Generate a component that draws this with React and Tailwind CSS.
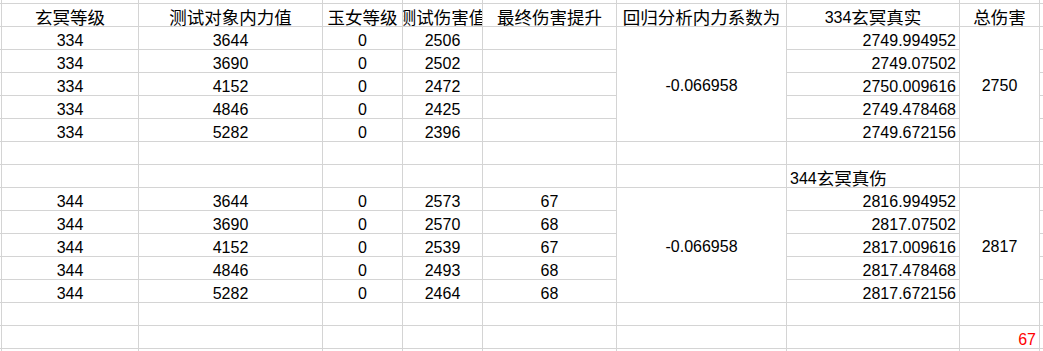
import React from 'react'
import clsx from 'clsx'

const block1 = [
  ['334', '3644', '0', '2506', '', '2749.994952'],
  ['334', '3690', '0', '2502', '', '2749.07502'],
  ['334', '4152', '0', '2472', '', '2750.009616'],
  ['334', '4846', '0', '2425', '', '2749.478468'],
  ['334', '5282', '0', '2396', '', '2749.672156'],
]

const block2 = [
  ['344', '3644', '0', '2573', '67', '2816.994952'],
  ['344', '3690', '0', '2570', '68', '2817.07502'],
  ['344', '4152', '0', '2539', '67', '2817.009616'],
  ['344', '4846', '0', '2493', '68', '2817.478468'],
  ['344', '5282', '0', '2464', '68', '2817.672156'],
]

const Cell = ({ children, align = 'center', merged = false, head = false, className }) => (
  <div
    className={clsx(
      'flex whitespace-nowrap bg-white leading-[16px]',
      merged ? 'row-span-5 items-center pt-[3px]' : 'items-end',
      align === 'center' && 'justify-center',
      align === 'right' && 'justify-end pr-[3px]',
      align === 'left' && 'justify-start pl-[3px]',
      head ? 'text-[17.5px]' : 'text-[16px]',
      className
    )}
  >
    {children}
  </div>
)

const EmptyRow = () => (
  <>
    {Array.from({ length: 10 }).map((_, i) => (
      <Cell key={i} />
    ))}
  </>
)

const Block = ({ rows, coef, total }) => (
  <>
    {rows.map((r, i) => (
      <React.Fragment key={i}>
        <Cell />
        <Cell>{r[0]}</Cell>
        <Cell>{r[1]}</Cell>
        <Cell>{r[2]}</Cell>
        <Cell>{r[3]}</Cell>
        <Cell>{r[4]}</Cell>
        {i === 0 && <Cell merged>{coef}</Cell>}
        <Cell align="right">{r[5]}</Cell>
        {i === 0 && <Cell merged>{total}</Cell>}
        <Cell />
      </React.Fragment>
    ))}
  </>
)

export default function App() {
  return (
    <div className="h-[351px] w-[1043px] overflow-hidden bg-white font-['Liberation_Sans','Noto_Sans_CJK_SC',sans-serif] text-black">
      <div className="grid w-max grid-cols-[1px_136px_183px_79px_79px_133px_169px_172px_79px_60px] grid-rows-[3px_repeat(15,22px)_22px] gap-px bg-[#d4d4d4]">
        <EmptyRow />

        {/* header */}
        <Cell />
        <Cell head>玄冥等级</Cell>
        <Cell head>测试对象内力值</Cell>
        <Cell head>玉女等级</Cell>
        <Cell head className="overflow-x-clip">测试伤害值</Cell>
        <Cell head>最终伤害提升</Cell>
        <Cell head>回归分析内力系数为</Cell>
        <Cell head>
          <span className="text-[16px]">334</span>玄冥真实
        </Cell>
        <Cell head>总伤害</Cell>
        <Cell />

        <Block rows={block1} coef="-0.066958" total="2750" />

        <EmptyRow />

        <Cell />
        <Cell />
        <Cell />
        <Cell />
        <Cell />
        <Cell />
        <Cell />
        <Cell head align="left">
          <span className="text-[16px]">344</span>玄冥真伤
        </Cell>
        <Cell />
        <Cell />

        <Block rows={block2} coef="-0.066958" total="2817" />

        <EmptyRow />

        <Cell />
        <Cell />
        <Cell />
        <Cell />
        <Cell />
        <Cell />
        <Cell />
        <Cell />
        <Cell align="right" className="text-[#ff0000]">67</Cell>
        <Cell />

        <EmptyRow />
      </div>
    </div>
  )
}
